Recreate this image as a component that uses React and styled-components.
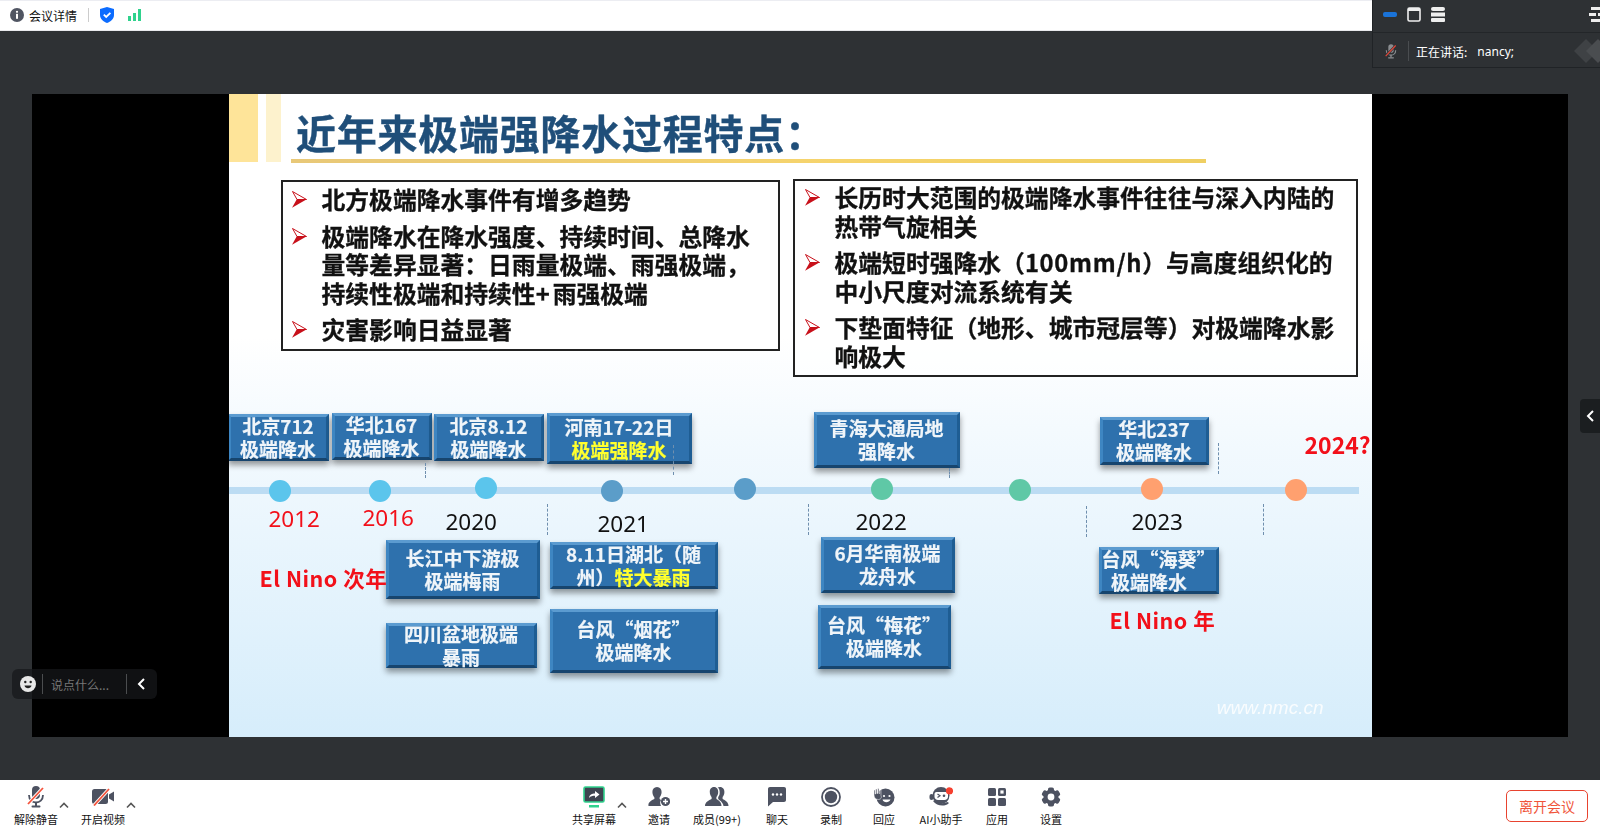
import styled, { createGlobalStyle } from "styled-components";

const GlobalStyle = createGlobalStyle`
  html, body { margin: 0; padding: 0; height: 100%; }
  body {
    background: #2e3134;
    font-family: "Noto Sans CJK SC", "Noto Sans", sans-serif;
    overflow: hidden;
  }
`;

const Page = styled.div`
  position: relative;
  width: 100%;
  height: 100vh;
  display: flex;
  flex-direction: column;
  overflow: hidden;
`;

/* top bar */
const TopBar = styled.div`
  height: 28px;
  flex: none;
  display: flex;
  align-items: center;
  padding: 0 0 1px 10px;
  background: #fff;
  border-top: 1px solid #ecedf2;
  border-bottom: 1px solid #e8e9ec;
`;
const MeetingInfo = styled.span`
  font-size: 12px;
  color: #111;
  margin-left: 5px;
`;
const TopDivider = styled.i`
  width: 1px;
  height: 14px;
  background: #ccc;
  margin: 0 11px;
`;
const SignalIcon = styled.svg`
  margin-left: 14px;
`;

/* floating panel top right */
const SidePanel = styled.div`
  position: absolute;
  top: 0;
  right: 0;
  width: 228px;
  height: 68px;
  box-sizing: border-box;
  background: #2e3134;
  border-left: 1px solid #202326;
  border-bottom: 1px solid #202326;
`;
const PanelIcons = styled.div`
  height: 33px;
  box-sizing: border-box;
  display: flex;
  align-items: center;
  gap: 10px;
  padding: 0 0 4px 10px;
  border-bottom: 1px solid #232629;
`;
const MinimizeBar = styled.i`
  width: 14px;
  height: 5px;
  border-radius: 2px;
  background: #1a73d8;
`;
const PanelRow = styled.div`
  display: flex;
  align-items: center;
  height: 34px;
  box-sizing: border-box;
  padding: 2px 0 0 12px;
  color: #fff;
  font-size: 12px;
`;
const PanelDivider = styled.i`
  width: 1px;
  height: 20px;
  background: #4a4d50;
  margin: 0 7px 0 11px;
`;
const SpeakerName = styled.span`
  margin-left: 10px;
  font-family: "Noto Sans", sans-serif;
`;
const CutIcon = styled.svg`
  margin-left: auto;
  margin-right: -1px;
`;
const Diamonds = styled.svg`
  margin-left: auto;
`;

/* stage */
const Stage = styled.div`
  flex: 1;
  min-height: 0;
  padding: 63px 32px 43px;
  display: flex;
`;
const Video = styled.div`
  flex: 1;
  background: #000;
  display: flex;
`;
const Slide = styled.div`
  position: relative;
  width: 1143px;
  margin-left: 196.5px;
  overflow: hidden;
  display: flex;
  flex-direction: column;
  background: linear-gradient(180deg, #fff 0%, #fff 38%, #f4fafe 52%, #d6edfb 100%);
  filter: blur(0.35px);
`;
const SlideHeader = styled.div`
  display: flex;
  height: 68px;
  flex: none;
`;
const Stripe = styled.i`
  width: ${(p) => p.$w}px;
  margin-right: 8px;
  background: ${(p) => p.$color};
`;
const TitleArea = styled.div`
  margin-left: 2px;
  width: 915px;
`;
const Title = styled.div`
  height: 65px;
  box-sizing: border-box;
  padding: 13px 0 0 5.5px;
  font-size: 40px;
  line-height: 50px;
  letter-spacing: 0.75px;
  font-weight: 700;
  -webkit-text-stroke: 0.4px #1f4e79;
  color: #1f4e79;
  white-space: nowrap;
`;
const TitleRule = styled.div`
  height: 4px;
  background: linear-gradient(90deg, #e8c878, #f6d46c 60%, #efcf62);
`;
const Notes = styled.div`
  display: flex;
  align-items: flex-start;
  gap: 13px;
  margin: 17px 0 0 52px;
`;
const NoteBox = styled.div`
  box-sizing: border-box;
  width: ${(p) => p.$w}px;
  height: ${(p) => p.$h}px;
  margin-top: ${(p) => p.$top}px;
  padding: ${(p) => p.$pad}px 0 0 ${(p) => p.$left}px;
  border: 2px solid #222;
  display: flex;
  flex-direction: column;
  gap: 8px;
  background: rgba(255, 255, 255, 0.6);
`;
const NoteItem = styled.div`
  display: grid;
  grid-template-columns: 15px 1fr;
  column-gap: ${(p) => p.$gap}px;
  font-size: 23.8px;
  line-height: 28.5px;
  font-weight: 700;
  -webkit-text-stroke: 0.3px #111;
  color: #111;
  white-space: nowrap;
`;
const ArrowIcon = styled.svg`
  margin-top: 6px;
`;
const WideLatin = styled.span`
  letter-spacing: ${(p) => p.$space}px;
`;

/* timeline canvas, coordinates are the ones of the page */
const Canvas = styled.div`
  position: absolute;
  inset: 0;
`;
const Axis = styled.div`
  position: absolute;
  left: 0;
  top: 393px;
  width: 1130px;
  height: 7px;
  background: #bcdcf3;
`;
const Dot = styled.i`
  position: absolute;
  left: ${(p) => p.$x - 229 - 11}px;
  top: ${(p) => p.$y - 94 - 11}px;
  width: 22px;
  height: 22px;
  border-radius: 50%;
  background: ${(p) => p.$color};
`;
const Dash = styled.i`
  position: absolute;
  left: ${(p) => p.$x - 229}px;
  top: ${(p) => p.$y - 94}px;
  height: ${(p) => p.$h}px;
  border-left: 1px dashed #6f8fae;
  z-index: 2;
`;
const Tag = styled.div`
  position: absolute;
  left: ${(p) => p.$x - 229}px;
  top: ${(p) => p.$y - 94}px;
  width: ${(p) => p.$w}px;
  height: ${(p) => p.$h}px;
  box-sizing: border-box;
  padding-bottom: 2px;
  display: flex;
  flex-direction: column;
  align-items: center;
  justify-content: center;
  background: #2e71ad;
  border-style: solid;
  border-width: 3px;
  border-color: #5b9bd0 #1e5d93 #17456e #3e86c2;
  box-shadow: 0 4px 6px rgba(0, 0, 0, 0.4);
  color: #f0f5f9;
  font-size: 19px;
  line-height: 23px;
  font-weight: 700;
  -webkit-text-stroke: 0.2px currentColor;
  white-space: pre;
`;
const Hot = styled.span`
  color: #ffff2e;
`;
const Year = styled.span`
  position: absolute;
  left: ${(p) => p.$x - 229}px;
  top: ${(p) => p.$y - 94 - 15}px;
  line-height: 30px;
  font-family: "Noto Sans", sans-serif;
  font-size: 22.5px;
  color: ${(p) => (p.$red ? "#f2101a" : "#111")};
`;
const RedNote = styled.span`
  position: absolute;
  left: ${(p) => p.$x - 229}px;
  top: ${(p) => p.$y - 94 - 15}px;
  line-height: 30px;
  font-size: ${(p) => p.$size || 21.5}px;
  font-weight: 700;
  letter-spacing: ${(p) => p.$space || 0}px;
  color: #f2101a;
  white-space: nowrap;
`;
const Watermark = styled.span`
  position: absolute;
  right: 48px;
  bottom: 18px;
  font-family: "Liberation Sans", sans-serif;
  font-style: italic;
  font-size: 19px;
  color: #fff;
  opacity: 0.85;
`;

/* overlays on the stage */
const ChatPill = styled.div`
  position: absolute;
  left: 12px;
  top: 669px;
  width: 145px;
  height: 30px;
  display: flex;
  align-items: center;
  border-radius: 6px;
  background: rgba(22, 24, 26, 0.72);
  color: #777;
  font-size: 12px;
`;
const PillFace = styled.svg`
  margin-left: 8px;
`;
const PillDivider = styled.i`
  width: 1px;
  height: 20px;
  background: #4b4d4f;
  margin: ${(p) => p.$margin};
`;
const PillText = styled.span`
  width: 75px;
`;
const Handle = styled.div`
  position: absolute;
  right: 0;
  top: 399px;
  width: 20px;
  height: 34px;
  display: flex;
  align-items: center;
  justify-content: center;
  border-radius: 4px 0 0 4px;
  background: #1b1e20;
`;

/* bottom toolbar */
const Toolbar = styled.div`
  height: 52px;
  flex: none;
  display: flex;
  background: #fff;
`;
const ToolGroup = styled.div`
  display: flex;
  margin-left: ${(p) => p.$left}px;
`;
const Tool = styled.div`
  position: relative;
  width: 50px;
  margin-right: ${(p) => p.$gap || 0}px;
  height: 52px;
  display: flex;
  flex-direction: column;
  align-items: center;
`;
const ToolIcon = styled.div`
  height: 30px;
  margin-top: 2px;
  display: flex;
  align-items: center;
  justify-content: center;
`;
const ToolLabel = styled.span`
  font-size: 11px;
  line-height: 14px;
  color: #111;
  white-space: nowrap;
`;
const Caret = styled.svg`
  position: absolute;
  left: 48px;
  top: 22px;
`;
const LeaveButton = styled.button`
  margin: 10px 12px 0 auto;
  width: 82px;
  height: 32px;
  box-sizing: border-box;
  background: #fff;
  border: 1px solid #e8432f;
  border-radius: 5px;
  color: #f0553a;
  font: inherit;
  font-size: 14px;
  padding: 0;
`;

const GREY = "#4d5261";

const InfoIcon = () => (
  <svg width="14" height="14" viewBox="0 0 14 14">
    <circle cx="7" cy="7" r="7" fill="#505562" />
    <circle cx="7" cy="3.8" r="1.1" fill="#fff" />
    <rect x="6" y="5.8" width="2" height="5" fill="#fff" />
  </svg>
);
const ShieldIcon = () => (
  <svg width="14" height="16" viewBox="0 0 14 16">
    <path d="M7 0 L14 2 V8 C14 12 10.5 14.6 7 16 C3.5 14.6 0 12 0 8 V2 Z" fill="#0c6cff" />
    <path d="M3.8 7.6 L6.2 10 L10.4 5.8" stroke="#fff" strokeWidth="1.8" fill="none" />
  </svg>
);
const Arrow = () => (
  <ArrowIcon width="15" height="17" viewBox="0 0 15 17">
    <path d="M0.5 0.5 L14.5 8.5 L5 8.5 Z" fill="#fff" stroke="#c8101a" strokeWidth="1" />
    <path d="M14.8 8.2 L0 16.8 L4.8 8.2 Z" fill="#c8101a" />
  </ArrowIcon>
);
const Chevron = () => (
  <svg width="9" height="12" viewBox="0 0 9 12">
    <path d="M7 1 L2 6 L7 11" stroke="#fff" strokeWidth="2" fill="none" />
  </svg>
);
const CaretUp = () => (
  <Caret width="10" height="7" viewBox="0 0 10 7">
    <path d="M1 5.5 L5 1.5 L9 5.5" stroke="#555" strokeWidth="1.6" fill="none" />
  </Caret>
);
const MicIcon = ({ w = 18, h = 22, color = GREY, slash = "#f4533c", halo = "#fff" }) => (
  <svg width={w} height={h} viewBox="0 0 18 22">
    <rect x="5" y="0" width="8" height="13" rx="4" fill={color} />
    <path d="M2 9 C2 19 16 19 16 9" stroke={color} strokeWidth="1.8" fill="none" />
    <rect x="8" y="16" width="2" height="4" fill={color} />
    <rect x="4.5" y="19.5" width="9" height="2" rx="1" fill={color} />
    <path d="M1 18 L16 2" stroke={halo} strokeWidth="3.6" />
    <path d="M1 18 L16 2" stroke={slash} strokeWidth="1.8" />
  </svg>
);
const VideoIcon = () => (
  <svg width="22" height="18" viewBox="0 0 22 18">
    <rect x="0" y="1" width="16" height="15" rx="2.5" fill={GREY} />
    <path d="M17 6.5 L22 3.5 V13.5 L17 10.5 Z" fill={GREY} />
    <path d="M2 17.5 L17 1" stroke="#fff" strokeWidth="3.4" />
    <path d="M2 17.5 L17 1" stroke="#f4533c" strokeWidth="1.8" />
  </svg>
);
const ShareIcon = () => (
  <svg width="22" height="22" viewBox="0 0 22 22">
    <rect x="1" y="1" width="20" height="15" rx="1.5" fill="#3e4450" stroke="#2fd28d" strokeWidth="1.6" />
    <path d="M6 12 C6.5 8.5 9 7.5 12 7.5 V5 L16.5 8.5 L12 12 V9.8 C9.5 9.8 7.5 10.2 6 12 Z" fill="#fff" />
    <rect x="6" y="19" width="10" height="2.5" fill="#2fd28d" />
  </svg>
);
const InviteIcon = () => (
  <svg width="22" height="20" viewBox="0 0 22 20">
    <path d="M9 0 C12 0 13.6 2.2 13.6 5 C13.6 7.6 12.4 9.4 11.6 10.4 V12 L13 13 C11.8 15 12 17 13 19 H0.5 C-0.2 15.5 3 13.5 6.4 12 V10.4 C5.6 9.4 4.4 7.6 4.4 5 C4.4 2.2 6 0 9 0 Z" fill={GREY} />
    <circle cx="17.5" cy="14.5" r="4.6" fill={GREY} />
    <path d="M17.5 12 V17 M15 14.5 H20" stroke="#fff" strokeWidth="1.4" />
  </svg>
);
const MembersIcon = () => (
  <svg width="24" height="20" viewBox="0 0 24 20">
    <path d="M15 0 C18 0 19.4 2.4 19.4 5 C19.4 7.4 18.4 9 17.6 10 V12 C20 13.2 23.5 15 23.5 19 H18.5 C18 15 14.5 13.5 13.2 12 V10 C14.5 8.5 15 6.5 14.6 4 C14.4 2.4 13.6 1 12.6 0.6 C13.3 0.2 14.1 0 15 0 Z" fill={GREY} />
    <path d="M9 0 C12 0 13.2 2.4 13.2 5 C13.2 7.4 12.2 9 11.4 10 V12 C13.5 13.2 16.5 15 16.5 19 H0 C0 15 4 13.2 6.6 12 V10 C5.8 9 4.8 7.4 4.8 5 C4.8 2.4 6 0 9 0 Z" fill={GREY} />
  </svg>
);
const ChatIcon = () => (
  <svg width="18" height="20" viewBox="0 0 18 20">
    <path d="M2 0 H16 C17.2 0 18 0.8 18 2 V13 C18 14.2 17.2 15 16 15 H5 L0 19.5 V2 C0 0.8 0.8 0 2 0 Z" fill={GREY} />
    <circle cx="5" cy="7.5" r="1.2" fill="#fff" />
    <circle cx="9" cy="7.5" r="1.2" fill="#fff" />
    <circle cx="13" cy="7.5" r="1.2" fill="#fff" />
  </svg>
);
const RecordIcon = () => (
  <svg width="20" height="20" viewBox="0 0 20 20">
    <circle cx="10" cy="10" r="9" fill="none" stroke={GREY} strokeWidth="1.8" />
    <circle cx="10" cy="10" r="6.2" fill={GREY} />
  </svg>
);
const ReactionIcon = () => (
  <svg width="22" height="20" viewBox="0 0 22 20">
    <circle cx="12.5" cy="10.5" r="9" fill={GREY} />
    <path d="M1 3 V8 C1 11 3 12.5 5.5 12.5 C8 12.5 9 10.5 8 8.5 V3 H6.8 V6.5 H6 V1.5 H4.8 V6.5 H4 V2 H2.8 V7 H2.2 V3 Z" fill={GREY} stroke="#fff" strokeWidth="0.5" />
    <circle cx="11" cy="9" r="1.1" fill="#fff" />
    <circle cx="16.5" cy="9" r="1.1" fill="#fff" />
    <path d="M9.5 12.5 C10.5 16 16 16 17.5 12.5 Z" fill="#fff" />
  </svg>
);
const AiIcon = () => (
  <svg width="24" height="20" viewBox="0 0 24 20">
    <circle cx="12" cy="8.5" r="8.5" fill={GREY} />
    <rect x="0.5" y="7" width="4" height="6" rx="2" fill={GREY} />
    <path d="M4 14 C8 19.5 16 20 20 16 L18.5 15 C14.5 17 9 16.5 6 13 Z" fill={GREY} />
    <path d="M5.5 7 C5.5 5.8 6.5 5 7.5 5 H17 C18.2 5 19 5.8 19 7 V9.5 C19 11.5 17.5 13 15.5 13 H9 C7 13 5.5 11.5 5.5 9.5 Z" fill="#fff" />
    <path d="M8.5 7 L11 8.8 L8.5 10.6" stroke={GREY} strokeWidth="1.2" fill="none" />
    <circle cx="15" cy="8.8" r="1.3" fill={GREY} />
    <circle cx="20.5" cy="3.8" r="3.6" fill="#f6402f" />
  </svg>
);
const AppsIcon = () => (
  <svg width="18" height="18" viewBox="0 0 18 18">
    <rect x="0" y="0" width="8" height="8" rx="1.5" fill={GREY} />
    <rect x="10" y="0" width="8" height="8" rx="1.5" fill={GREY} />
    <rect x="12.4" y="2.4" width="3.2" height="3.2" fill="#fff" />
    <rect x="0" y="10" width="8" height="8" rx="1.5" fill={GREY} />
    <rect x="10" y="10" width="8" height="8" rx="1.5" fill={GREY} />
  </svg>
);
const SettingsIcon = () => (
  <svg width="20" height="20" viewBox="0 0 20 20">
    <circle cx="10" cy="10" r="7.5" fill={GREY} />
    {[0, 60, 120, 180, 240, 300].map((a) => (
      <rect key={a} x="7" y="0.4" width="6" height="5" rx="1.8" fill={GREY} transform={`rotate(${a} 10 10)`} />
    ))}
    <circle cx="10" cy="10" r="3.4" fill="#fff" />
  </svg>
);

const dots = [
  [280, 491, "#5bc5ec"], [380, 491, "#5bc5ec"], [486, 488, "#5bc5ec"], [612, 491, "#5b9dc9"],
  [745, 489, "#5b9dc9"], [882, 489, "#5fc8a6"], [1020, 490, "#5fc8a6"], [1152, 489, "#ffa06f"],
  [1296, 490, "#ffa06f"],
];
const dashes = [
  [425, 463, 15], [673, 445, 30], [547, 504, 31], [949, 468, 10], [1218, 443, 31],
  [808, 504, 31], [1086, 506, 31], [1263, 504, 31],
];
const tags = [
  { x: 228, y: 414, w: 101, h: 47, lines: ["北京712", "极端降水"] },
  { x: 332, y: 413, w: 100, h: 47, lines: ["华北167", "极端降水"] },
  { x: 434, y: 414, w: 110, h: 47, lines: ["北京8.12", "极端降水"] },
  { x: 547, y: 413, w: 145, h: 51, lines: ["河南17-22日", <Hot key="h">极端强降水</Hot>] },
  { x: 386, y: 540, w: 154, h: 59, lines: ["长江中下游极", "极端梅雨"] },
  { x: 386, y: 623, w: 151, h: 45, lines: ["四川盆地极端", "暴雨"] },
  { x: 550, y: 542, w: 168, h: 47, lines: ["8.11日湖北（随", <span key="s">州）<Hot>特大暴雨</Hot></span>] },
  { x: 550, y: 609, w: 168, h: 64, lines: ["台风“烟花”", "极端降水"] },
  { x: 814, y: 412, w: 146, h: 56, lines: ["青海大通局地", "强降水"] },
  { x: 1100, y: 417, w: 109, h: 48, lines: ["华北237", "极端降水"] },
  { x: 821, y: 537, w: 134, h: 56, lines: ["6月华南极端", "龙舟水"] },
  { x: 818, y: 605, w: 133, h: 64, lines: ["台风“梅花”", "极端降水"] },
  { x: 1099, y: 547, w: 120, h: 47, lines: ["台风“海葵”", "极端降水　"] },
];
const years = [
  [269, 519, "2012", true], [363, 518, "2016", true], [446, 522, "2020"], [598, 524, "2021"],
  [856, 522, "2022"], [1132, 522, "2023"],
];
const leftTools = [
  { gap: 17, label: "解除静音", icon: <MicIcon />, caret: true },
  { label: "开启视频", icon: <VideoIcon />, caret: true },
];
const centerTools = [
  { gap: 15, label: "共享屏幕", icon: <ShareIcon />, caret: true },
  { gap: 8, label: "邀请", icon: <InviteIcon /> },
  { gap: 10, label: "成员(99+)", icon: <MembersIcon /> },
  { gap: 4, label: "聊天", icon: <ChatIcon /> },
  { gap: 3, label: "录制", icon: <RecordIcon /> },
  { gap: 7, label: "回应", icon: <ReactionIcon /> },
  { gap: 6, label: "AI小助手", icon: <AiIcon /> },
  { gap: 4, label: "应用", icon: <AppsIcon /> },
  { label: "设置", icon: <SettingsIcon /> },
];

const ToolList = ({ items }) =>
  items.map((t) => (
    <Tool key={t.label} $gap={t.gap}>
      <ToolIcon>{t.icon}</ToolIcon>
      <ToolLabel>{t.label}</ToolLabel>
      {t.caret && <CaretUp />}
    </Tool>
  ));

const App = () => {
  return (
    <Page>
      <GlobalStyle />
      <TopBar>
        <InfoIcon />
        <MeetingInfo>会议详情</MeetingInfo>
        <TopDivider />
        <ShieldIcon />
        <SignalIcon width="13" height="12" viewBox="0 0 13 12">
          <rect x="0" y="7" width="3" height="5" fill="#2fd28d" />
          <rect x="5" y="4" width="3" height="8" fill="#2fd28d" />
          <rect x="10" y="0" width="3" height="12" fill="#2fd28d" />
        </SignalIcon>
      </TopBar>

      <Stage>
        <Video>
          <Slide>
            <SlideHeader>
              <Stripe $w={29} $color="#fee499" />
              <Stripe $w={15} $color="#fdf2cd" />
              <TitleArea>
                <Title>近年来极端强降水过程特点：</Title>
                <TitleRule />
              </TitleArea>
            </SlideHeader>

            <Notes>
              <NoteBox $w={499} $h={171} $top={1} $pad={3} $left={9}>
                <NoteItem $gap={15}><Arrow /><span>北方极端降水事件有增多趋势</span></NoteItem>
                <NoteItem $gap={15}>
                  <Arrow />
                  <span>极端降水在降水强度、持续时间、总降水<br />量等差异显著：日雨量极端、雨强极端，<br />持续性极端和持续性<WideLatin $space={3}>+</WideLatin>雨强极端</span>
                </NoteItem>
                <NoteItem $gap={15}><Arrow /><span>灾害影响日益显著</span></NoteItem>
              </NoteBox>
              <NoteBox $w={565} $h={198} $top={0} $pad={2} $left={10}>
                <NoteItem $gap={15}>
                  <Arrow />
                  <span>长历时大范围的极端降水事件往往与深入内陆的<br />热带气旋相关</span>
                </NoteItem>
                <NoteItem $gap={15}>
                  <Arrow />
                  <span>极端短时强降水（<WideLatin $space={0.7}>100mm/h</WideLatin>）与高度组织化的<br />中小尺度对流系统有关</span>
                </NoteItem>
                <NoteItem $gap={15}>
                  <Arrow />
                  <span>下垫面特征（地形、城市冠层等）对极端降水影<br />响极大</span>
                </NoteItem>
              </NoteBox>
            </Notes>

            <Canvas>
              <Axis />
              {dots.map(([x, y, color]) => (
                <Dot key={x} $x={x} $y={y} $color={color} />
              ))}
              {tags.map((t) => (
                <Tag key={t.x + "-" + t.y} $x={t.x} $y={t.y} $w={t.w} $h={t.h}>
                  {t.lines.map((line, i) => (
                    <div key={i}>{line}</div>
                  ))}
                </Tag>
              ))}
              {dashes.map(([x, y, h]) => (
                <Dash key={x} $x={x} $y={y} $h={h} />
              ))}
              {years.map(([x, y, text, red]) => (
                <Year key={text} $x={x} $y={y} $red={red}>{text}</Year>
              ))}
              <RedNote $x={1305} $y={444} $size={23}>2024?</RedNote>
              <RedNote $x={260} $y={578} $space={0.5}>El Nino 次年</RedNote>
              <RedNote $x={1110} $y={620} $space={0.5}>El Nino 年</RedNote>
              <Watermark>www.nmc.cn</Watermark>
            </Canvas>
          </Slide>
        </Video>
      </Stage>

      <Toolbar>
        <ToolGroup $left={11}><ToolList items={leftTools} /></ToolGroup>
        <ToolGroup $left={441}><ToolList items={centerTools} /></ToolGroup>
        <LeaveButton>离开会议</LeaveButton>
      </Toolbar>

      <SidePanel>
        <PanelIcons>
          <MinimizeBar />
          <svg width="14" height="15" viewBox="0 0 14 15">
            <rect x="1" y="1" width="12" height="13" rx="1.5" fill="none" stroke="#eee" strokeWidth="1.6" />
            <rect x="1" y="1" width="12" height="3" fill="#eee" />
          </svg>
          <svg width="14" height="15" viewBox="0 0 14 15">
            <rect x="0" y="0" width="14" height="4" rx="2" fill="#eee" />
            <rect x="0" y="5.5" width="14" height="4" fill="#eee" />
            <rect x="0" y="11" width="14" height="4" rx="1" fill="#eee" />
          </svg>
          <CutIcon width="12" height="15" viewBox="0 0 12 15">
            <rect x="2" y="0" width="10" height="3" fill="#eee" />
            <rect x="0" y="6" width="7" height="3" fill="#eee" />
            <rect x="9" y="6" width="3" height="3" fill="#eee" />
            <rect x="2" y="12" width="10" height="3" fill="#eee" />
          </CutIcon>
        </PanelIcons>
        <PanelRow>
          <MicIcon w={12} h={15} color="#8a8d90" slash="#e5473a" halo="#2e3134" />
          <PanelDivider />
          <span>正在讲话:</span>
          <SpeakerName>nancy;</SpeakerName>
          <Diamonds width="26" height="24" viewBox="0 0 26 24">
            <path d="M12 0 L24 12 L12 24 L0 12 Z" fill="#3f4245" />
            <path d="M24 0 L36 12 L24 24 L12 12 Z" fill="#4a4d50" />
          </Diamonds>
        </PanelRow>
      </SidePanel>

      <ChatPill>
        <PillFace width="16" height="16" viewBox="0 0 16 16">
          <circle cx="8" cy="8" r="8" fill="#e8e8e8" />
          <circle cx="5.3" cy="6" r="1.2" fill="#222" />
          <circle cx="10.7" cy="6" r="1.2" fill="#222" />
          <path d="M4.5 9.5 H11.5 C11 13 5 13 4.5 9.5 Z" fill="#222" />
        </PillFace>
        <PillDivider $margin="0 8px 0 6px" />
        <PillText>说点什么...</PillText>
        <PillDivider $margin="0 10px 0 0" />
        <Chevron />
      </ChatPill>

      <Handle><Chevron /></Handle>
    </Page>
  );
};

export default App;
